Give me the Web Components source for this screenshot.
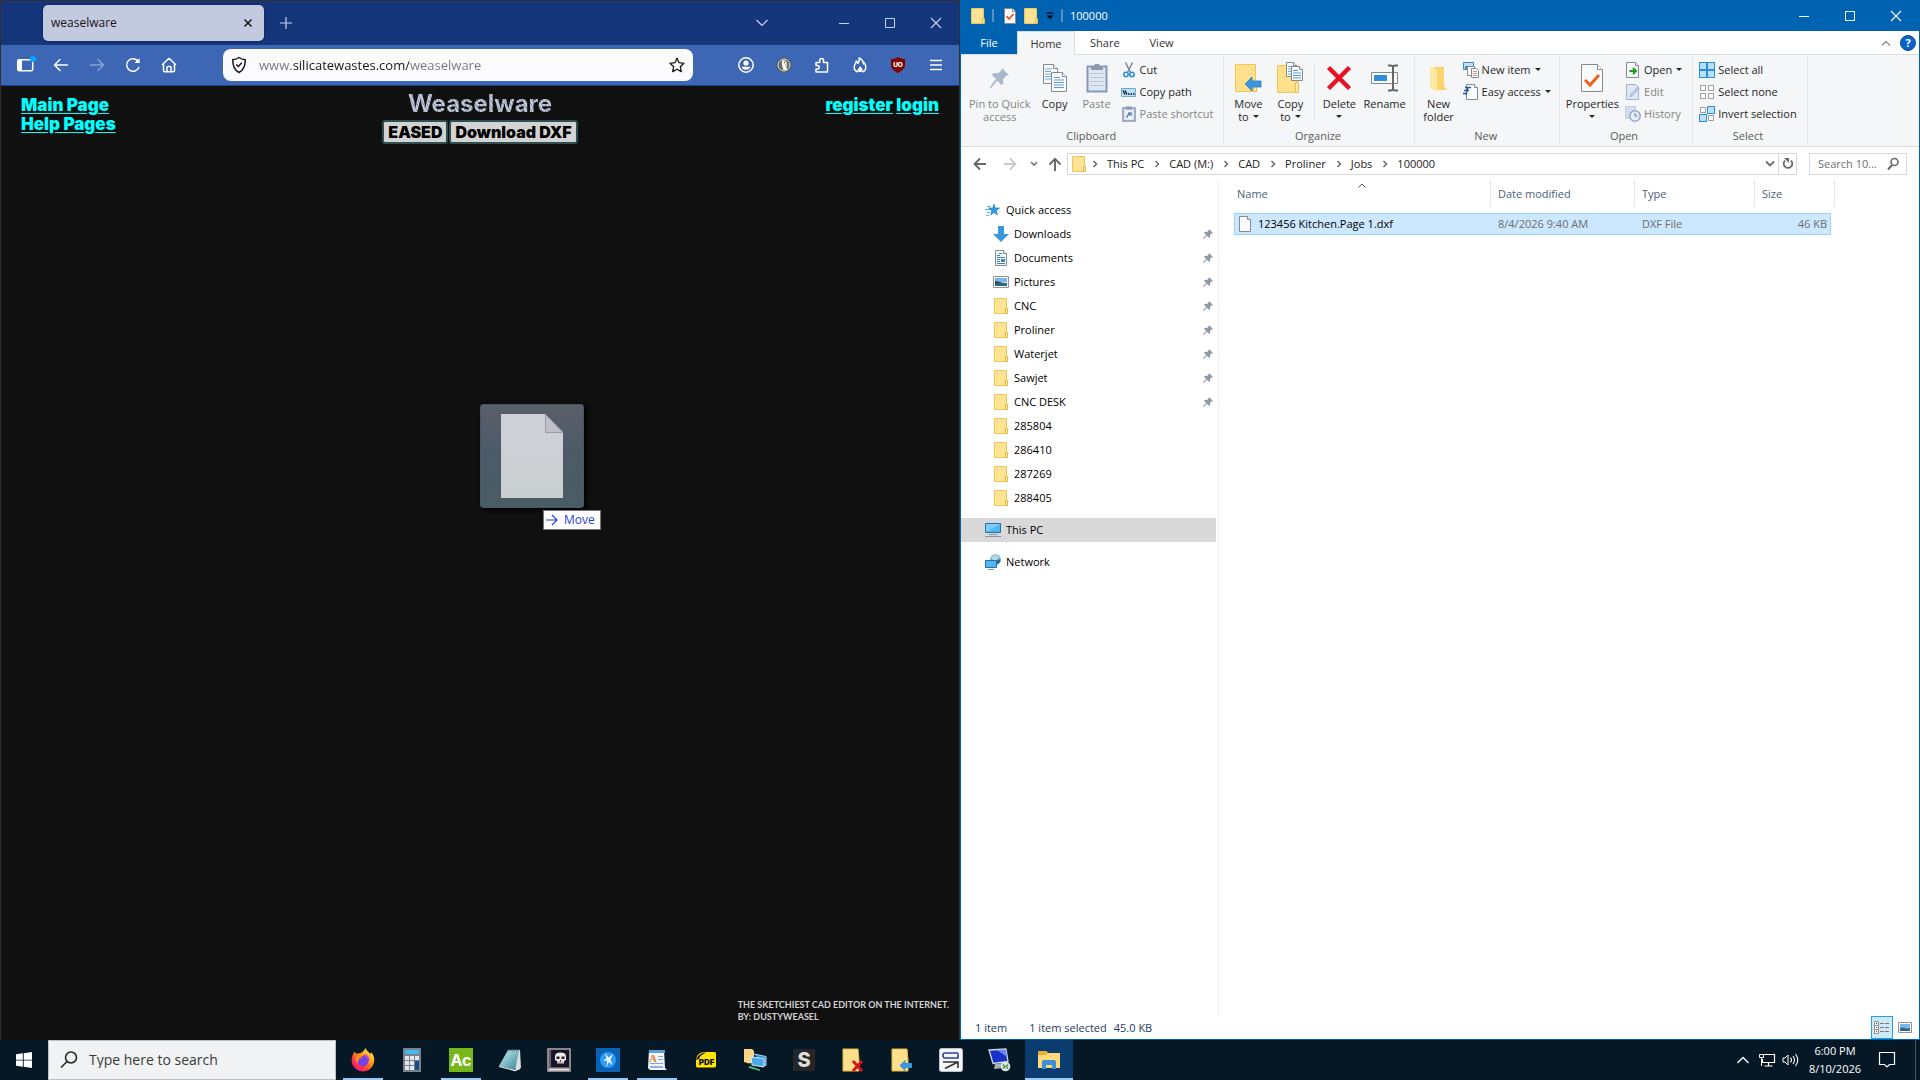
<!DOCTYPE html>
<html lang="en">
<head>
<meta charset="utf-8">
<meta name="viewport" content="width=device-width, initial-scale=1">
<title>weaselware</title>
<style>
  html, body {
    height: 100%;
    margin: 0;
  }
  body {
    background: #101010;
    font: 11px/16px "Open Sans", "Noto Sans", sans-serif;
    overflow: hidden;
  }
</style>
</head>
<body>
<desk-top>
  <browser-window></browser-window>
  <file-explorer></file-explorer>
  <task-bar slot="taskbar"></task-bar>
</desk-top>

<script>
// ---------- icons ----------

const svg = (w, h, body) =>
  `<svg width="${w}" height="${h}" viewBox="0 0 ${w} ${h}" fill="none" xmlns="http://www.w3.org/2000/svg" aria-hidden="true">${body}</svg>`;

const line = 'stroke="currentColor" stroke-width="1.5" stroke-linecap="round" stroke-linejoin="round"';
const page = (x, y, w, h, f) =>
  `<path d="M${x + 0.5} ${y + 0.5}h${w - f - 1}l${f} ${f}v${h - f - 1}h-${w - 1}z" fill="#fafbfc" stroke="#838a92"/><path d="M${x + w - f - 0.5} ${y + 0.5}v${f}h${f}" stroke="#838a92" fill="#fff"/>`;
const square = (x, y, on) =>
  `<rect x="${x + 0.5}" y="${y + 0.5}" width="${on ? 7 : 5}" height="${on ? 7 : 5}" fill="${on ? "#b9e0fb" : "#fff"}" stroke="${on ? "#2b8fdc" : "#a0a0a0"}"/>`;
const folderBig =
  '<path d="M1.5 1.5h20v27h-20z" fill="#ffe08a" stroke="#ecc75a"/><path d="M19.5 18.5h3v10h-3z" fill="#ffe9a8" stroke="#e6bb45"/>';

const ICONS = {
  sidebar: svg(20, 18, '<rect x="2.7" y="3.7" width="15" height="11" rx="1.5" stroke="#fff" stroke-width="1.5"/><path d="M3 4h4v11H3z" fill="#fff"/><circle cx="18" cy="3" r="3" fill="#00a8ff"/>'),
  back: svg(16, 16, `<path d="M14.500 8H1.500M7 2.500 1.500 8 7 13.500" ${line}/>`),
  forward: svg(16, 16, `<path d="M1.500 8h13M9 2.500 14.500 8 9 13.500" ${line}/>`),
  reload: svg(16, 16, `<path d="M13.800 10.500A6.300 6.300 0 1 1 12.500 3.600L14 5" ${line}/><path d="M14.500 1v5h-5z" fill="currentColor"/>`),
  home: svg(16, 16, `<path d="M1.500 7.500 8 1.200l6.500 6.300M2.500 7v6.500q0 1.200 1.200 1.200h8.600q1.200 0 1.200-1.200V7M6 14.500v-4q0-1 1-1h2q1 0 1 1v4" ${line}/>`),
  shield: svg(16, 18, '<path d="M8 1.500c2 1.500 4 2 6.300 2.300 0 6-1 10.200-6.300 12.700C2.700 14 1.700 9.800 1.700 3.800 4 3.500 6 3 8 1.500z" stroke="#15141a" stroke-width="1.500" stroke-linejoin="round"/><path d="m5.300 8.500 2 2 3.500-3.700" stroke="#15141a" stroke-width="1.500"/>'),
  star: svg(16, 16, '<path d="m8 1.200 2 4.500 5 .6-3.700 3.400 1 4.900L8 12.200l-4.300 2.400 1-4.900L1 6.300l5-.6z" stroke="#15141a" stroke-width="1.300" stroke-linejoin="round"/>'),
  account: svg(16, 16, '<circle cx="8" cy="8" r="7.200" stroke="#fff" stroke-width="1.500"/><circle cx="8" cy="6" r="2.600" fill="#fff"/><path d="M3.800 9.800h8.400c0 2-2 3-4.200 3s-4.200-1-4.200-3z" fill="#fff"/>'),
  duck: svg(16, 16, '<circle cx="8" cy="8" r="7.500" fill="#555"/><circle cx="8" cy="8" r="6" stroke="#e4e4e4" fill="#666"/><path d="M6 3.500c3-1 5 1 4.800 3.500-.2 2-.3 3.500.2 6H7.300C6.800 10 5 7 6 3.500z" fill="#f4f4f4"/><path d="M9 7.500h3l-1 1.500H9z" fill="#bbb"/><circle cx="8.500" cy="5.500" r=".7" fill="#444"/>'),
  puzzle: svg(16, 16, `<path d="M2 15h11.500V5.500H9.500V3.300a1.900 1.900 0 0 0-3.800 0v2.200H2v3h1.500a1.700 1.700 0 0 1 0 3.500H2z" ${line}/>`),
  flame: svg(14, 16, '<path d="M5 15C2 14 1 12 1.200 9.700 1.400 7.500 3 6.500 3.200 4c1 .5 1.500 1.500 1.500 2.500C6.500 5 6.500 3 6 1c3.500 1.500 4.500 4 4.500 6 .5-.3.800-.8.800-1.300 1.200 1.800 1.700 3.500 1.500 5.300-.2 2-1.500 3.500-3.500 4" stroke="#fff" stroke-width="1.400" stroke-linejoin="round"/><path d="M7 9c2 2 3 3.500 2.500 5-.5 1.300-4.500 1.300-5 0C4 12.500 6 11.500 7 9z" fill="#fff"/>'),
  ublock: svg(16, 16, '<path d="M8 0c2.200 1.500 4.500 2 7 2.100v6c0 3.500-3 6-7 7.900-4-1.900-7-4.400-7-7.900v-6C3.500 2 5.800 1.500 8 0z" fill="#800000"/><text x="8" y="10" text-anchor="middle" font-family="Inter,sans-serif" font-weight="800" font-size="6.500" fill="#fff">UO</text>'),
  menu: svg(14, 12, '<path d="M1 1.500h12M1 6h12M1 10.500h12" stroke="#fff" stroke-width="1.400"/>'),
  tabClose: svg(10, 10, '<path d="m1.500 1.500 7 7m0-7-7 7" stroke="#15141a" stroke-width="1.500"/>'),
  plus: svg(12, 12, '<path d="M6 0v12M0 6h12" stroke="#c8d3ee" stroke-width="1.200"/>'),
  chevronDown: svg(12, 8, '<path d="m.5 1 5.500 5.500L11.500 1" stroke="currentColor" stroke-width="1.200"/>'),
  minimize: svg(10, 10, '<path d="M0 5.500h10" stroke="currentColor"/>'),
  maximize: svg(10, 10, '<path d="M.5.5h9v9h-9z" stroke="currentColor"/>'),
  close: svg(10, 10, '<path d="m0 0 10 10M10 0 0 10" stroke="currentColor" stroke-width="1.100"/>'),
  moveArrow: svg(14, 12, '<path d="M1 6h11M7 1l5 5-5 5" stroke="#2b3fd0" stroke-width="1.200"/>'),

  folder: svg(14, 16, '<path d="M1 .5h11.500v15H.5V.5z" fill="#ffe394" stroke="#ecc75a"/><path d="M11.500 10.500h2v5h-2z" fill="#ffe9a8" stroke="#e6bb45"/>'),
  checkDoc: svg(12, 16, page(0, 0, 12, 16, 3) + '<path d="m2.500 8 2.500 3 4.500-5" stroke="#e8501a" stroke-width="1.700"/>'),
  quickMenu: svg(8, 8, '<path d="M.5 1h7" stroke="#000" stroke-width="1.200"/><path d="M.5 3.500h7L4 7z" fill="#000"/>'),
  collapse: svg(10, 6, '<path d="M1 5.500 5 1.500l4 4" stroke="#8a8a8a" stroke-width="1.300"/>'),
  help: svg(16, 16, '<circle cx="8" cy="8" r="7.500" fill="#0a63c9" stroke="#0a4b96"/><text x="8" y="12" text-anchor="middle" font-family="Open Sans,sans-serif" font-weight="700" font-size="11" fill="#fff">?</text>'),
  bigPin: svg(24, 26, '<path d="m14 3 7 7-2.500.6-3.500 3.700.3 4.200-1.800 1.500L9.300 15.700 3 23l-1.200-.8L8 14 3.800 9.800 6 8l4.300.3L13.700 5z" fill="#aab8cc"/>'),
  bigCopy: svg(26, 30, page(1, 1, 15, 20, 4) + '<path d="M3 6h7M3 8.500h6M3 11h6M3 13.500h6M3 16h6" stroke="#74a9dc"/>' + page(9, 9, 16, 20, 4) + '<path d="M12 14.500h6M12 17h10M12 19.500h10M12 22h10M12 24.500h10" stroke="#5e9ad6"/>'),
  bigPaste: svg(22, 30, '<rect x="1.500" y="3.500" width="19" height="25" fill="#dfe6f2" stroke="#8698b5" stroke-width="2"/><path d="M4 10.500h14M4 14.500h14M4 18.500h14M4 22.500h14" stroke="#b7c4da"/><path d="M5 3h3l1-2h4l1 2h3v4H5z" fill="#8a98b0"/>'),
  cut: svg(12, 16, '<path d="m2.500.5 5 10M9.500.5l-5 10" stroke="#7b8794" stroke-width="1.500"/><circle cx="3" cy="12.500" r="2.200" stroke="#2b8fdc" stroke-width="1.500"/><circle cx="9" cy="12.500" r="2.200" stroke="#2b8fdc" stroke-width="1.500"/>'),
  copyPath: svg(15, 9, '<path d="M.5.5h14v8H.5z" fill="#b9e0fb" stroke="#6fa9d6"/><path d="m2 2.500 2 4m0-4 2 4" stroke="#111" stroke-width="1.200"/><path d="M7 6h1.500M9.500 6H11M12 6h1.500" stroke="#111" stroke-width="1.500"/>'),
  pasteShortcut: svg(14, 16, '<rect x="1" y="2" width="12" height="13" fill="#dfe6f2" stroke="#8698b5" stroke-width="1.500"/><path d="M4 .5h6v3H4z" fill="#8a98b0"/><path d="M4 5h6v8H4z" fill="#f8fafd"/><path d="M5 12c0-2 1-3.500 3-3.500M6 7h3v3" stroke="#5e7faf" stroke-width="1.400"/>'),
  moveTo: svg(28, 30, folderBig + '<path d="m11 21 7-7v4h9v6h-9v4z" fill="#3a96dd" stroke="#2b7fc4" stroke-width=".8"/>'),
  copyTo: svg(28, 32, '<g transform="translate(0 2)">' + folderBig + '</g>' + page(10, 0, 11, 15, 3) + '<path d="M12 4.500h4M12 7h3M12 9.500h3M12 12h3" stroke="#74a9dc"/>' + page(15, 4, 12, 15, 3) + '<path d="M17 8.500h5M17 11h8M17 13.500h8M17 16h8" stroke="#5e9ad6"/>'),
  delete: svg(26, 26, '<path d="m2.500 2.500 21 21M23.500 2.500l-21 21" stroke="#e81123" stroke-width="4.500"/>'),
  rename: svg(28, 28, '<path d="M.5 8.500h26v11H.5z" fill="#fff" stroke="#838a92"/><path d="M3 11h13v6H3z" fill="#2b8fdc"/><path d="M17 1.500h2.500q2.500 0 2.500 2 0-2 2.500-2H27M17 26.500h2.500q2.500 0 2.500-2 0 2 2.500 2H27M22 3v22" stroke="#666" stroke-width="2"/>'),
  newFolder: svg(20, 30, '<path d="M5 4h10v19l3 4H5z" fill="#fbd46d"/><path d="m1 3 7 4v22l-7-4z" fill="#ffe8a6"/>'),
  newItem: svg(16, 16, '<path d="M.5.5h10v7H.5z" fill="#b9e0fb" stroke="#4b86b0"/><path d="M2 4h3v3H2z" fill="#4b86b0"/><path d="M4.500 4.500h7v9h-7z" fill="#fff" stroke="#838a92"/><path d="M8.500 6.500h5l2 2v7h-7z" fill="#fff" stroke="#838a92"/><path d="M10 9.500h4M10 11.500h4M10 13.500h4" stroke="#d58a8a"/>'),
  easyAccess: svg(16, 16, page(3, 0, 12, 16, 3) + '<path d="M2 3.500h6M1 6.500h5M0 9.500h3M5 3l-2 8" stroke="#245a96" stroke-width="1.300"/>'),
  properties: svg(22, 30, page(0, 1, 22, 28, 5) + '<path d="m4 17 5 5 9-10" stroke="#f0611a" stroke-width="3"/>'),
  open: svg(14, 16, page(0, 0, 13, 16, 3) + '<path d="M3.500 9h6M7 6l3 3-3 3" stroke="#12a012" stroke-width="1.900"/>'),
  edit: svg(14, 16, '<path d="M.5.500h9l3 3v12H.5z" fill="#dfe8f5" stroke="#9fb2d0"/><path d="m4 13 1-3 7-7 1.500 1.500-7 7z" fill="#c3d0e6" stroke="#9fb2d0"/>'),
  history: svg(16, 16, '<path d="M.5.500h10v12H.5z" fill="#d3deef" stroke="#c0cde2"/><circle cx="10" cy="10" r="5.200" fill="#e9eff8" stroke="#93a7c8" stroke-width="1.500"/><path d="M10 7v3h2.500" stroke="#7288ad" stroke-width="1.200"/>'),
  selectAll: svg(16, 16, square(0, 0, 1) + square(8, 0, 1) + square(0, 8, 1) + square(8, 8, 1)),
  selectNone: svg(16, 16, square(1, 1) + square(9, 1) + square(1, 9) + square(9, 9)),
  invert: svg(16, 16, square(1, 1) + square(8, 0, 1) + square(0, 8, 1) + square(9, 9)),
  navBack: svg(14, 14, '<path d="M13 7H2M7 1.500 1.500 7 7 12.500" stroke="currentColor" stroke-width="1.800"/>'),
  navForward: svg(14, 14, '<path d="M1 7h11M7 1.500 12.500 7 7 12.500" stroke="currentColor" stroke-width="1.800"/>'),
  navUp: svg(14, 14, '<path d="M7 14V2M1.500 7.500 7 1.800l5.500 5.700" stroke="#666" stroke-width="1.900"/>'),
  small: svg(8, 6, '<path d="m1 1 3 3 3-3" stroke="#777" stroke-width="1.700"/>'),
  combo: svg(10, 8, '<path d="m1 1.500 4 4 4-4" stroke="#6a6a6a" stroke-width="1.800"/>'),
  crumb: svg(6, 8, '<path d="m1.500 1 3 3-3 3" stroke="#6a6a6a" stroke-width="1.500"/>'),
  refresh: svg(12, 14, '<path d="M3 3.500a4.300 4.300 0 1 0 6 0" stroke="#6a6a6a" stroke-width="1.800"/><path d="M2 1h5v5z" fill="#6a6a6a"/>'),
  find: svg(12, 14, '<circle cx="7.500" cy="5" r="3.500" stroke="#6a6a6a" stroke-width="1.600"/><path d="M5 8 1 12.500" stroke="#6a6a6a" stroke-width="2"/>'),
  quick: svg(16, 14, '<path d="m9 1 1.300 4H14.500L11.200 7.700l1.300 4.300L9 9.500 5.500 12l1.300-4.300L3.500 5h4.200z" fill="#2b9be8" stroke="#1b7fc8" stroke-width=".6"/><path d="M2 3.500h4M0 6.500h5M2 9.500h3M1 12.500h3" stroke="#67b7ee"/>'),
  download: svg(16, 16, '<path d="M5 0h6v8h5l-8 8-8-8h5z" fill="#3a96dd"/>'),
  documents: svg(14, 16, page(1, 0, 12, 16, 3) + '<path d="M3 5.500h3M5 3.500h3M3 7.500h8M3 9.500h3M3 11.500h3M3 13.500h8" stroke="#3a86b8"/><path d="M7 9h4v3H7z" fill="#3a86b8"/>'),
  pictures: svg(16, 12, '<path d="M.5.500h15v11H.5z" fill="#fff" stroke="#8f959b"/><path d="M2 2h12v4H2z" fill="#79b4ee"/><path d="M2 6c5-1 7 1 12 1v3H2z" fill="#2d6a86"/><path d="M2 5c3 0 5 2 8 2.500H2z" fill="#2c4a46"/>'),
  pc: svg(16, 16, '<path d="M.5 1.500h15v9H.5z" fill="#4fb6f7" stroke="#2b6f9f"/><path d="M1 2h14L1 10z" fill="#7fccfb"/><path d="M4 12.500h8M0 14.500h16" stroke="#8799ab"/>'),
  network: svg(16, 16, '<circle cx="10.500" cy="5.500" r="5.300" fill="#6fa7c2"/><path d="M6 4c3-4 6-4 9 0-2 0-3 1-3 3s-4 0-6-3z" fill="#b6d7e5"/><path d="M11 8c2-3 3-3 4.500-2 0 2-2 4-4 4.500z" fill="#2c6787"/><path d="M.5 6.500h11v7H.5z" fill="#4fb6f7" stroke="#2b6f9f"/><path d="M3 15.500h6" stroke="#8799ab"/>'),
  pin: svg(10, 10, '<path d="M6 0 10 4 8.500 4.500 7 6l.2 2-1 1L4 6.800.7 10 0 9.300l3.200-3.300L1 3.800l1-1 2 .2L5.500 1.500z" fill="#8e9aa6"/>'),
  file: svg(14, 16, page(1, 0, 12, 16, 3)),
  sort: svg(8, 5, '<path d="M.5 4.500 4 1l3.500 3.500" stroke="#555"/>'),
  details: svg(16, 13, '<path d="M.5.500h4v12h-4zM.5 4.500h4M.5 8.500h4" fill="#fff" stroke="#8f8f8f"/><path d="M2 2h1v1H2zM2 6h1v1H2z" fill="#333"/><path d="M2 10h1v1H2z" fill="#c22"/><path d="M6 2.500h4m1 0h4m-9 4h4m1 0h4m-9 4h4m1 0h4" stroke="#777"/>'),
  thumbs: svg(14, 11, '<path d="M.5.500h13v10H.5z" fill="#fff" stroke="#8f959b"/><path d="M2 2h10v4H2z" fill="#79b4ee"/><path d="M2 6c4-1 6 1 10 0v3H2z" fill="#2d6a86"/>'),
  dragFile: svg(62, 84, '<defs><linearGradient id="p" x2="0" y2="1"><stop stop-color="#cfd1d9"/><stop offset="1" stop-color="#c9cece"/></linearGradient></defs><path d="M0 0h44l18 18v66H0z" fill="url(#p)"/><path d="M44.500.5v18H61.500z" fill="#bdc0c6" stroke="#9a9da4"/>'),

  windows: svg(16, 16, '<path d="M0 2.300 6.800 1.300v6.400H0zM7.700 1.200 16 0v7.700H7.700zM0 8.500h6.800v6.300L0 13.800zM7.700 8.500H16V16l-8.300-1.200z" fill="#fff"/>'),
  search: svg(18, 18, '<circle cx="11" cy="6.500" r="5.500" stroke="#222" stroke-width="1.500"/><path d="M7 10.500 1 16.500" stroke="#222" stroke-width="1.500"/>'),
  firefox: svg(24, 24, '<defs><linearGradient id="f" x1="1" x2=".2" y2="1"><stop offset=".1" stop-color="#fff44f"/><stop offset=".45" stop-color="#ff980e"/><stop offset=".75" stop-color="#ff3647"/><stop offset="1" stop-color="#e31587"/></linearGradient></defs><path d="M14.500 0c1 3 4 4 4.500 6l1.500-1.500c2.500 3 3 6 2.500 9.500-1 5.500-5.500 9.500-11 9.500S1 19 .7 13.500C.5 10 1 8 2.500 5.500L3 3.500l2.500 2.300c1-.6 2-.7 3-.5C10 5 12.500 4 14.500 0z" fill="url(#f)"/><circle cx="12" cy="13" r="5.300" fill="#7542e5"/><path d="M5 8.500c2-1.500 5-1 6.500 1-1.500 0-3.500 1-4 2.500-.8 1.500-.5 3 0 4-3-1.500-4-5-2.500-7.500z" fill="#ff8a16"/><path d="M13 7c3.500.5 5 3 4.500 6" stroke="#b833e1" stroke-width="1.500"/>'),
  calc: svg(18, 24, '<path d="M0 0h18v24H0z" fill="#78838d"/><path d="M2 2h14v4H2z" fill="#45b8ef"/><path d="M2 8h4v4H2zm5 0h4v4H7zm5 0h4v4h-4zM2 13h4v4H2zm5 0h4v4H7zM2 18h4v4H2zm5 0h4v4H7z" fill="#e3e7ea"/><path d="M12 13h4v9h-4z" fill="#174a86"/>'),
  ac: svg(24, 24, '<path d="M0 0h24v24H0z" fill="#76b81a"/><text x="12" y="18" text-anchor="middle" font-family="Inter,sans-serif" font-weight="700" font-size="16" fill="#fff">Ac</text>'),
  notes: svg(24, 24, '<defs><linearGradient id="n" x2="1" y2="1"><stop stop-color="#d2eef0"/><stop offset=".5" stop-color="#7fbcc7"/><stop offset="1" stop-color="#2f7f92"/></linearGradient></defs><path d="m10 3 12-1 1 18-5 2z" fill="#d9dfe0"/><path d="m10 2 11 1-4 19L1 18z" fill="url(#n)"/><path d="M1 18.500 17 22.500l5-2" stroke="#eef7f8" stroke-width="1.200"/><path d="M10 2.500h12" stroke="#7f8e92" stroke-width="2" stroke-dasharray="1 1"/>'),
  book: svg(24, 24, '<path d="M1 1h22v22H1z" fill="#171431" stroke="#b4aaa6" stroke-width="1.500"/><path d="M3 1v19h20" stroke="#877" stroke-width="1.500"/><path d="M2 20.500h20v2H2z" fill="#e9e5de"/><path d="M8 8.500q0-4 5.500-4T19 8.500v3.500l-2 1v2.500h-7V13l-2-1z" fill="#f0ece1"/><path d="M9.500 8.500h3V11h-3zm5 0h3V11h-3zM13 12h1v1.500h-1z" fill="#2b1d2f"/><path d="M11 13.500v2m2-2v2m2-2v2" stroke="#a33" stroke-width=".8"/>'),
  kite: svg(24, 24, '<path d="M0 0h24v24H0z" fill="#0a62b4"/><circle cx="12" cy="12" r="8" fill="#2f9bf2"/><path d="m9 5 3.500 4.500L17 6l-2.500 5.500 2 5.500-3.500-3-2.500 5 .5-6.500-4 .5 3.500-3z" fill="#e8f5ff"/>'),
  wordpad: svg(20, 22, '<path d="M2 1h15l1 18 2 2H3L1 19z" fill="#f1f5fa"/><path d="M2 1h16v3H2z" fill="#5f9fd2"/><text x="2" y="13" font-family="Liberation Serif,serif" font-weight="700" font-size="11" fill="#e8822a">A</text><path d="M11 7.500h5m-5 3h5M3 14.500h13" stroke="#7fa5d4"/><path d="M3 17h13v2H3z" fill="#8fb3de"/>'),
  pdf: svg(22, 18, '<path d="M1 10C1 4 5 1 10 1h9.500Q21 1 21 2.500V15q0 1.500-1.500 1.500h-17Q1 16.500 1 15z" fill="#ffe500"/><path d="M1 9C3 3 8 1.500 11 1.500 8 3 5 4.500 4 8z" fill="#222"/><text x="11.500" y="13.500" text-anchor="middle" font-family="Inter,sans-serif" font-weight="900" font-size="8" fill="#111">PDF</text>'),
  netFolder: svg(24, 24, '<path d="M1 1h8l2 2v11l-5 1.500L1 14z" fill="#f6d585"/><path d="m11 6 12 2.500v9L20 17" fill="#2b8fdc" stroke="#a9d8f6"/><path d="m8 9 13 1.500v8.500L9 17z" fill="#4aa8e8" stroke="#d7eefb"/><path d="m7 18 10 3.500V23L5 19.500z" fill="#4dc47e"/>'),
  essLogo: svg(24, 24, '<path d="M1 1h22v22H1z" fill="#262626"/><text x="12" y="19" text-anchor="middle" font-family="Inter,sans-serif" font-weight="800" font-size="20" fill="#dedede">S</text>'),
  folderX: svg(22, 24, '<path d="M1 1h15l1 11v11H1z" fill="#ffe08a" stroke="#e6bb45"/><path d="m11 13 9 10m0-10-9 10" stroke="#d8111c" stroke-width="2.800"/>'),
  folderBack: svg(22, 24, '<path d="M1 1h15l1 11v11H1z" fill="#ffe08a" stroke="#e6bb45"/><path d="m8.500 17.500 6-6V15H21v5h-6.500v3.500z" fill="#3a96dd"/>'),
  scroll: svg(24, 24, '<rect x=".5" y=".5" width="23" height="23" rx="2" fill="#f5f6fa" stroke="#bfc3c9"/><path d="M19 5H6Q4 5 4 7.500T6 10h13V5.500" stroke="#2f3f9f" stroke-width="1.600"/><path d="M4 14h15v6M19 14 6 20.500" stroke="#333" stroke-width="1.600"/>'),
  remote: svg(24, 24, '<path d="m1 2 17-1 2 12.500-15 2z" fill="#1a31c9" stroke="#d5d9e0" stroke-width="1.300"/><path d="m9 2 9-.5 1 7.500z" fill="#6c86f2"/><path d="m7 16 7-1 1 5-9 1z" fill="#a9b2bc"/><circle cx="17.500" cy="18.500" r="4.800" fill="#dfe5e2"/><path d="m15 16.500 2 2-2 2m5-4-2 2 2 2" stroke="#3f9a4d" stroke-width="1.400"/>'),
  explorer: svg(22, 20, '<path d="M0 1h8l2 2h12v15H0z" fill="#ffd87a"/><path d="M0 1h8l2 2-2 2H0z" fill="#e9ad35"/><path d="M4 19v-7q0-2 2-2h10q2 0 2 2v7h-4v-4H8v4z" fill="#3a8fd8"/>'),
  trayUp: svg(14, 8, '<path d="M1.500 7 7 1.500 12.500 7" stroke="#fff" stroke-width="1.300"/>'),
  trayNet: svg(18, 14, '<path d="M6 1.500h10.500v8H4.500V6M10.500 10v3M6.500 13h8" stroke="#fff" stroke-width="1.200"/><path d="M1.500 1.500h4v3h-4zM3.500 4.500V13" stroke="#fff"/>'),
  volume: svg(18, 14, '<path d="M1 5v4h2l3 3V2L3 5z" stroke="#fff"/><path d="M8.500 4.500q2 2.500 0 5M11 3q3 4 0 8M13.500 1q4.500 6 0 12" stroke="#fff" stroke-width="1.100"/>'),
  notice: svg(18, 18, '<path d="M1.500 1.500h15v12h-5L9 16l-2.500-2.500h-5z" stroke="#fff" stroke-width="1.200"/>'),
};

// ---------- base ----------

const RESET = `
  * { box-sizing: border-box; }
  :host([hidden]) { display: none; }
  button, input {
    margin: 0;
    padding: 0;
    border: 0;
    background: none;
    color: inherit;
    font: inherit;
  }
  button { cursor: default; }
  button, a { outline-offset: -2px; }
  .ctl { display: grid; place-items: center; }
`;

class BaseElement extends HTMLElement {
  constructor() {
    super();
    this.attachShadow({ mode: "open" });
  }

  connectedCallback() {
    this.shadowRoot.innerHTML = `<style>${RESET}${this.styles()}</style>${this.markup()}`;
  }

  styles() { return ""; }
  markup() { return ""; }
}

class UiIcon extends BaseElement {
  styles() {
    return `
      :host { display: inline-grid; place-items: center; flex: none; }
      svg { display: block; overflow: visible; }
    `;
  }
  markup() {
    return ICONS[this.getAttribute("name")] || "";
  }
}
customElements.define("ui-icon", UiIcon);

class DeskTop extends BaseElement {
  styles() {
    return `
      :host { display: grid; grid-template-rows: minmax(0, 1fr) auto; height: 100vh; }
      .windows { display: grid; grid-template-columns: 1fr 1fr; min-height: 0; }
    `;
  }
  markup() {
    return `<div class="windows"><slot></slot></div><slot name="taskbar"></slot>`;
  }
}
customElements.define("desk-top", DeskTop);

class WindowControls extends BaseElement {
  styles() {
    return `
      :host { display: flex; align-self: stretch; margin-left: auto; }
      .ctl { width: 46px; }
    `;
  }
  markup() {
    return ["minimize", "maximize", "close"]
      .map((n) => `<button class="ctl" type="button" aria-label="${n}"><ui-icon name="${n}"></ui-icon></button>`)
      .join("");
  }
}
customElements.define("window-controls", WindowControls);

// ---------- browser ----------

class BrowserWindow extends BaseElement {
  styles() {
    return `
      :host {
        display: grid;
        grid-template-rows: 44px 41px minmax(0, 1fr);
        min-width: 0;
        border: 1px solid #303030;
        border-bottom: 0;
        background: #101010;
      }
      .tabs { display: flex; align-items: center; background: #16367c; color: #c8d3ee; padding-left: 42px; }
      .tab {
        display: flex;
        align-items: center;
        justify-content: space-between;
        width: 221px;
        height: 36px;
        padding: 0 10px 0 8px;
        border-radius: 5px;
        background: #c3cae0;
        color: #15141a;
        font-size: 12px;
        box-shadow: 0 0 3px #0a1f50;
      }
      .tab .ctl { width: 12px; height: 12px; }
      .new { width: 44px; height: 36px; }
      .list { width: 46px; height: 36px; margin-left: auto; }
      window-controls { margin-left: 36px; }
      .bar {
        display: flex;
        align-items: center;
        padding: 0 4px 0 6px;
        background: #3d66b5;
        border-bottom: 1px solid #1c3f85;
        color: #fff;
      }
      .bar .ctl { width: 36px; height: 32px; }
      .off { color: #8ba3d4; }
      .url {
        display: flex;
        align-items: center;
        flex: 1;
        height: 32px;
        margin: 0 34px 0 36px;
        padding: 0 0 0 8px;
        border-radius: 8px;
        background: #fbfbfe;
      }
      .url .ctl { width: 32px; }
      /* the host name stands out from the rest of the address */
      .url input {
        flex: 1;
        min-width: 0;
        height: 24px;
        margin-left: 12px;
        outline: 0;
        font-size: 13px;
        color: #6f6f78;
        background: linear-gradient(90deg, #74747c 33px, #15141a 33px, #15141a 150px, #74747c 150px);
        background-clip: text;
        -webkit-background-clip: text;
        -webkit-text-fill-color: transparent;
      }
      .extras { display: flex; }
      .extras .ctl { width: 38px; }
    `;
  }
  markup() {
    const btn = (name, label, cls = "") =>
      `<button class="ctl ${cls}" type="button" aria-label="${label}"><ui-icon name="${name}"></ui-icon></button>`;
    return `
      <div class="tabs">
        <div class="tab"><span>weaselware</span>${btn("tabClose", "Close tab")}</div>
        ${btn("plus", "New tab", "new")}
        ${btn("chevronDown", "List all tabs", "list")}
        <window-controls></window-controls>
      </div>
      <div class="bar">
        ${btn("sidebar", "Sidebar")}
        ${btn("back", "Back")}
        ${btn("forward", "Forward", "off")}
        ${btn("reload", "Reload")}
        ${btn("home", "Home")}
        <div class="url">
          <ui-icon name="shield"></ui-icon>
          <input type="text" aria-label="Address" value="www.silicatewastes.com/weaselware" spellcheck="false">
          ${btn("star", "Bookmark")}
        </div>
        <div class="extras">
          ${btn("account", "Account")}
          ${btn("duck", "Search extension")}
          ${btn("puzzle", "Extensions")}
          ${btn("flame", "Clear data")}
          ${btn("ublock", "Blocker")}
          ${btn("menu", "Menu")}
        </div>
      </div>
      <weasel-page></weasel-page>
    `;
  }
}
customElements.define("browser-window", BrowserWindow);

class WeaselPage extends BaseElement {
  styles() {
    return `
      :host {
        position: relative;
        display: flex;
        flex-direction: column;
        min-height: 0;
        font: 900 16px/19px Inter, sans-serif;
      }
      header { display: grid; grid-template-columns: 1fr auto 1fr; padding: 4px 20px 0; }
      nav { padding-top: 6px; font-size: 17px; }
      nav a { color: #0ff; text-underline-offset: 2px; }
      .left a { display: block; width: fit-content; }
      .right { text-align: right; }
      .mid { text-align: center; }
      h1 {
        width: fit-content;
        margin: 0 auto;
        font-size: 24px;
        line-height: 28px;
        color: #b8bfd2;
        background: repeating-linear-gradient(60deg, #c3cadb 0 2px, #8e95a8 2px 3px);
        background-clip: text;
        -webkit-background-clip: text;
        -webkit-text-fill-color: transparent;
      }
      .row { display: flex; gap: 1px; margin-top: 2px; }
      .row button {
        height: 24px;
        padding: 0 4px;
        border: 2px solid #2f4f4f;
        border-radius: 3px;
        background: #d3d3d3;
        color: #000;
      }
      footer {
        align-self: flex-end;
        margin: auto 10px 17px 0;
        font: 700 9px/12px Lato, sans-serif;
        color: #d3d3d3;
      }
      drag-ghost { position: absolute; left: 50%; top: 318px; }
    `;
  }
  markup() {
    return `
      <header>
        <nav class="left"><a href="#main">Main Page</a><a href="#help">Help Pages</a></nav>
        <div class="mid">
          <h1>Weaselware</h1>
          <div class="row"><button type="button">EASED</button><button type="button">Download DXF</button></div>
        </div>
        <nav class="right"><a href="#register">register</a> <a href="#login">login</a></nav>
      </header>
      <footer>THE SKETCHIEST CAD EDITOR ON THE INTERNET.<br>BY: DUSTYWEASEL</footer>
      <drag-ghost>Move</drag-ghost>
    `;
  }
}
customElements.define("weasel-page", WeaselPage);

// file thumbnail that follows the pointer while dragging
class DragGhost extends BaseElement {
  styles() {
    return `
      :host { display: block; font: 12px/18px "Open Sans", sans-serif; }
      .thumb {
        display: grid;
        place-items: center;
        width: 104px;
        height: 104px;
        border: 1px solid #46566a;
        border-radius: 3px;
        background: linear-gradient(#5b5f68, #4c5a68 45%, #495c63);
        box-shadow: 2px 2px 5px #000;
      }
      .tip {
        display: flex;
        align-items: center;
        gap: 5px;
        width: fit-content;
        margin: 2px 0 0 63px;
        padding: 0 5px 0 1px;
        border: 1px solid #767676;
        background: #fff;
        color: #2b3fd0;
      }
    `;
  }
  markup() {
    return `
      <div class="thumb"><ui-icon name="dragFile"></ui-icon></div>
      <div class="tip"><ui-icon name="moveArrow"></ui-icon><slot></slot></div>
    `;
  }
}
customElements.define("drag-ghost", DragGhost);

// ---------- ribbon ----------

class RibbonGroup extends BaseElement {
  styles() {
    return `
      :host {
        display: flex;
        flex-direction: column;
        margin: 2px 0;
        padding: 2px 7px 0 3px;
        border-right: 1px solid #e2e3e4;
      }
      :host([tight]) { padding-right: 5px; }
      :host(:first-child) { padding-left: 5px; }
      .items { display: flex; flex: 1; }
      .name { text-align: center; line-height: 16px; color: #5a5a5a; }
      ::slotted(hr) { width: 1px; margin: 5px 3px 8px; border: 0; background: #e2e3e4; }
      ::slotted(div) { display: flex; flex-direction: column; }
    `;
  }
  markup() {
    return `<div class="items"><slot></slot></div><div class="name">${this.getAttribute("label")}</div>`;
  }
}
customElements.define("ribbon-group", RibbonGroup);

class RibbonButton extends BaseElement {
  styles() {
    return `
      :host { display: block; color: #262626; }
      :host([off]) { color: #838383; }
      button {
        display: flex;
        align-items: center;
        gap: 3px;
        height: 22px;
        padding: 0 3px;
        white-space: nowrap;
      }
      ui-icon { width: 16px; }
      :host([large]) button {
        flex-direction: column;
        gap: 0;
        min-width: 42px;
        height: auto;
        line-height: 13px;
      }
      :host([large]) ui-icon { width: 32px; height: 38px; }
      .arrow::after {
        content: "";
        display: inline-block;
        margin-left: 4px;
        vertical-align: 3px;
        border: 3px solid transparent;
        border-top-color: currentColor;
        border-bottom: 0;
      }
      :host([bare]) .arrow::after { margin-left: 0; }
    `;
  }
  markup() {
    const arrow = this.hasAttribute("menu") ? ' class="arrow"' : "";
    return `<button type="button"><ui-icon name="${this.getAttribute("icon")}"></ui-icon><span${arrow}><slot></slot></span></button>`;
  }
}
customElements.define("ribbon-button", RibbonButton);

class RibbonBar extends BaseElement {
  styles() {
    return `
      :host {
        display: flex;
        height: 93px;
        background: #f5f6f7;
        border-top: 1px solid #dadbdc;
        border-bottom: 1px solid #dadbdc;
      }
      .groups { display: flex; }
    `;
  }
  markup() {
    return `
      <div class="groups">
        <ribbon-group label="Clipboard">
          <ribbon-button large off icon="bigPin">Pin to Quick<br>access</ribbon-button>
          <ribbon-button large icon="bigCopy">Copy</ribbon-button>
          <ribbon-button large off icon="bigPaste">Paste</ribbon-button>
          <div>
            <ribbon-button icon="cut">Cut</ribbon-button>
            <ribbon-button icon="copyPath">Copy path</ribbon-button>
            <ribbon-button off icon="pasteShortcut">Paste shortcut</ribbon-button>
          </div>
        </ribbon-group>
        <ribbon-group label="Organize" tight>
          <ribbon-button large menu icon="moveTo">Move<br>to</ribbon-button>
          <ribbon-button large menu icon="copyTo">Copy<br>to</ribbon-button>
          <hr>
          <ribbon-button large menu bare icon="delete">Delete<br></ribbon-button>
          <ribbon-button large icon="rename">Rename</ribbon-button>
        </ribbon-group>
        <ribbon-group label="New" tight>
          <ribbon-button large icon="newFolder">New<br>folder</ribbon-button>
          <div>
            <ribbon-button menu icon="newItem">New item</ribbon-button>
            <ribbon-button menu icon="easyAccess">Easy access</ribbon-button>
          </div>
        </ribbon-group>
        <ribbon-group label="Open">
          <ribbon-button large menu bare icon="properties">Properties<br></ribbon-button>
          <div>
            <ribbon-button menu icon="open">Open</ribbon-button>
            <ribbon-button off icon="edit">Edit</ribbon-button>
            <ribbon-button off icon="history">History</ribbon-button>
          </div>
        </ribbon-group>
        <ribbon-group label="Select">
          <div>
            <ribbon-button icon="selectAll">Select all</ribbon-button>
            <ribbon-button icon="selectNone">Select none</ribbon-button>
            <ribbon-button icon="invert">Invert selection</ribbon-button>
          </div>
        </ribbon-group>
      </div>
    `;
  }
}
customElements.define("ribbon-bar", RibbonBar);

// ---------- explorer ----------

class AddressRow extends BaseElement {
  styles() {
    return `
      :host { display: flex; align-items: center; height: 34px; padding: 0 12px 0 4px; color: #1b1b1b; }
      .ctl { width: 30px; height: 22px; color: #666; }
      .ctl.off { color: #c8c8c8; }
      .ctl.slim { width: 18px; }
      .ctl.up { width: 24px; }
      .path {
        display: flex;
        align-items: center;
        flex: 1;
        height: 22px;
        padding-left: 4px;
        border: 1px solid #d9d9d9;
        min-width: 0;
      }
      .path a { color: inherit; text-decoration: none; margin: 0 10px 0 9px; }
      .path ui-icon[name="crumb"] { width: 6px; }
      .path ui-icon[name="folder"] { margin-right: 6px; }
      .path .combo { margin-left: auto; width: 16px; }
      .path .reload { width: 18px; border-left: 1px solid #d9d9d9; }
      .find {
        display: flex;
        align-items: center;
        width: 98px;
        height: 22px;
        margin-left: 12px;
        padding: 0 7px 0 8px;
        border: 1px solid #d9d9d9;
      }
      .find input { flex: 1; min-width: 0; outline: 0; }
      .find input::placeholder { color: #6d6d6d; }
    `;
  }
  markup() {
    const crumbs = ["This PC", "CAD (M:)", "CAD", "Proliner", "Jobs", "100000"];
    return `
      <button class="ctl" type="button" aria-label="Back"><ui-icon name="navBack"></ui-icon></button>
      <button class="ctl off" type="button" aria-label="Forward"><ui-icon name="navForward"></ui-icon></button>
      <button class="ctl slim" type="button" aria-label="Recent"><ui-icon name="small"></ui-icon></button>
      <button class="ctl up" type="button" aria-label="Up"><ui-icon name="navUp"></ui-icon></button>
      <div class="path">
        <ui-icon name="folder"></ui-icon>
        ${crumbs.map((c) => `<ui-icon name="crumb"></ui-icon><a href="#path">${c}</a>`).join("")}
        <button class="ctl combo" type="button" aria-label="Previous locations"><ui-icon name="combo"></ui-icon></button>
        <button class="ctl reload" type="button" aria-label="Refresh"><ui-icon name="refresh"></ui-icon></button>
      </div>
      <label class="find"><input type="text" aria-label="Search" placeholder="Search 10..."><ui-icon name="find"></ui-icon></label>
    `;
  }
}
customElements.define("address-row", AddressRow);

class NavItem extends BaseElement {
  styles() {
    return `
      :host { display: block; }
      a {
        display: flex;
        align-items: center;
        height: 24px;
        padding: 0 3px 0 24px;
        color: #000;
        text-decoration: none;
      }
      :host([child]) a { padding-left: 32px; }
      :host([current]) { background: #d9d9d9; }
      .kind { width: 16px; margin-right: 5px; }
      .pin { margin-left: auto; }
    `;
  }
  markup() {
    const pin = this.hasAttribute("pinned") ? '<ui-icon class="pin" name="pin"></ui-icon>' : "";
    return `<a href="#go"><ui-icon class="kind" name="${this.getAttribute("icon")}"></ui-icon><slot></slot>${pin}</a>`;
  }
}
customElements.define("nav-item", NavItem);

class FileTable extends BaseElement {
  styles() {
    return `
      :host { display: block; position: relative; padding: 0 0 0 15px; color: #6d6d6d; }
      .sort { position: absolute; left: 139px; top: 2px; }
      table { width: 597px; max-width: 100%; table-layout: fixed; border-collapse: separate; border-spacing: 0; }
      th, td { padding: 0 0 0 7px; text-align: left; font-weight: 400; white-space: nowrap; }
      th { height: 26px; color: #4c607a; border-right: 1px solid #e5e5e5; }
      th:first-child, td:first-child { padding-left: 3px; }
      th:last-child { position: relative; border-right: 0; }
      th:last-child::after {
        content: "";
        position: absolute;
        inset: 0 -4px 0 auto;
        border-right: 1px solid #e5e5e5;
      }
      tbody::before { content: ""; display: block; height: 6px; }
      td { height: 22px; background: #cce8ff; border: solid #99d1ff; border-width: 1px 0; }
      td:first-child { border-left-width: 1px; color: #000; }
      td:last-child { border-right-width: 1px; text-align: right; padding-right: 3px; }
      .name { display: flex; align-items: center; gap: 6px; }
      col.d { width: 144px; }
      col.t { width: 120px; }
      col.s { width: 76px; }
    `;
  }
  markup() {
    return `
      <ui-icon class="sort" name="sort"></ui-icon>
      <table>
        <colgroup><col><col class="d"><col class="t"><col class="s"></colgroup>
        <thead><tr><th>Name</th><th>Date modified</th><th>Type</th><th>Size</th></tr></thead>
        <tbody>
          <tr>
            <td><span class="name"><ui-icon name="file"></ui-icon>123456 Kitchen.Page 1.dxf</span></td>
            <td>8/4/2026 9:40 AM</td>
            <td>DXF File</td>
            <td>46 KB</td>
          </tr>
        </tbody>
      </table>
    `;
  }
}
customElements.define("file-table", FileTable);

class FileExplorer extends BaseElement {
  styles() {
    return `
      :host {
        display: flex;
        flex-direction: column;
        min-width: 0;
        border: 1px solid #0063b1;
        border-top: 0;
        background: #fff;
      }
      .title { display: flex; align-items: center; height: 31px; padding-left: 10px; background: #0063b1; color: #fff; }
      .title i { width: 2px; height: 13px; margin: 0 7px; border: solid #5b8fbf; border-width: 0 1px; }
      .quick { display: flex; align-items: center; gap: 8px; margin-left: 3px; }
      .tabs { display: flex; height: 23px; color: #333; }
      .tabs button { padding: 0 15px; }
      .tabs .file { width: 56px; background: #0063b1; color: #fff; }
      .tabs .on {
        width: 58px;
        height: 24px;
        padding: 0;
        border: 1px solid #dadbdc;
        border-bottom: 0;
        background: #f5f6f7;
        z-index: 1;
      }
      .tabs .file { padding: 0; }
      .tabs .ctl { padding: 0; width: 22px; }
      .tabs .up { margin-left: auto; }
      .body { display: grid; grid-template-columns: 258px minmax(0, 1fr); flex: 1; min-height: 0; }
      .tree { padding: 17px 2px 0 0; border-right: 1px solid #f0f0f0; }
      .tree .gap { margin-top: 8px; }
      .status { display: flex; align-items: center; height: 23px; padding: 0 3px 0 14px; color: #1e395b; }
      .status span { margin-right: 22px; }
      .status span + span { margin-right: 7px; }
      .views { display: flex; margin-left: auto; gap: 1px; }
      .views .ctl { width: 22px; height: 23px; }
      .views .on { border: 1px solid #26a0da; background: #cde8f6; }
    `;
  }
  markup() {
    const pinned = ["CNC", "Proliner", "Waterjet", "Sawjet", "CNC DESK"];
    const recent = ["285804", "286410", "287269", "288405"];
    return `
      <div class="title">
        <ui-icon name="folder"></ui-icon><i></i>
        <div class="quick"><ui-icon name="checkDoc"></ui-icon><ui-icon name="folder"></ui-icon><ui-icon name="quickMenu"></ui-icon></div>
        <i></i><span>100000</span>
        <window-controls></window-controls>
      </div>
      <div class="tabs">
        <button class="file" type="button">File</button>
        <button class="on" type="button">Home</button>
        <button type="button">Share</button>
        <button type="button">View</button>
        <button class="ctl up" type="button" aria-label="Minimize the ribbon"><ui-icon name="collapse"></ui-icon></button>
        <button class="ctl" type="button" aria-label="Help"><ui-icon name="help"></ui-icon></button>
      </div>
      <ribbon-bar></ribbon-bar>
      <address-row></address-row>
      <div class="body">
        <nav class="tree">
          <nav-item icon="quick">Quick access</nav-item>
          <nav-item child pinned icon="download">Downloads</nav-item>
          <nav-item child pinned icon="documents">Documents</nav-item>
          <nav-item child pinned icon="pictures">Pictures</nav-item>
          ${pinned.map((n) => `<nav-item child pinned icon="folder">${n}</nav-item>`).join("")}
          ${recent.map((n) => `<nav-item child icon="folder">${n}</nav-item>`).join("")}
          <nav-item class="gap" current icon="pc">This PC</nav-item>
          <nav-item class="gap" icon="network">Network</nav-item>
        </nav>
        <file-table></file-table>
      </div>
      <div class="status">
        <span>1 item</span><span>1 item selected</span><span>45.0 KB</span>
        <div class="views">
          <button class="ctl on" type="button" aria-label="Details"><ui-icon name="details"></ui-icon></button>
          <button class="ctl" type="button" aria-label="Large thumbnails"><ui-icon name="thumbs"></ui-icon></button>
        </div>
      </div>
    `;
  }
}
customElements.define("file-explorer", FileExplorer);

// ---------- taskbar ----------

class TaskButton extends BaseElement {
  styles() {
    return `
      :host { display: block; width: 48px; }
      button { width: 100%; height: 100%; border: solid transparent; border-width: 2px 0; }
      :host([running]) button { background: linear-gradient(#9ccaf5, #9ccaf5) center bottom / 40px 2px no-repeat border-box; }
      :host([active]) button { background: #0b3c6f; border-bottom-color: #9ccaf5; }
    `;
  }
  markup() {
    const icon = this.getAttribute("icon");
    return `<button class="ctl" type="button" aria-label="${icon}"><ui-icon name="${icon}"></ui-icon></button>`;
  }
}
customElements.define("task-button", TaskButton);

class TaskBar extends BaseElement {
  styles() {
    return `
      :host { display: flex; height: 40px; background: #061826; color: #fff; }
      .start { width: 48px; }
      .search {
        display: flex;
        align-items: center;
        gap: 11px;
        width: 288px;
        padding-left: 11px;
        border: 1px solid #bfbfbf;
        background: #f1f2f4;
        color: #2b2b2b;
        font-size: 14px;
      }
      .search input { flex: 1; min-width: 0; outline: 0; }
      .search input::placeholder { color: #3a3a3a; }
      .apps { display: flex; gap: 1px; margin-left: 3px; }
      .tray { display: flex; margin-left: auto; padding-right: 4px; }
      .tray .ctl { width: 24px; }
      .tray .clock {
        width: 64px;
        line-height: 18px;
        text-align: center;
        white-space: nowrap;
      }
      .tray .note { width: 40px; margin-right: 8px; }
      .tray .peek { width: 1px; background: #4a5863; }
    `;
  }
  markup() {
    const apps = [
      ["firefox", "running"], ["calc"], ["ac", "running"], ["notes"], ["book"], ["kite", "running"],
      ["wordpad", "running"], ["pdf"], ["netFolder"], ["essLogo"], ["folderX"], ["folderBack"],
      ["scroll"], ["remote"], ["explorer", "active"],
    ];
    return `
      <button class="ctl start" type="button" aria-label="Start"><ui-icon name="windows"></ui-icon></button>
      <label class="search"><ui-icon name="search"></ui-icon><input type="text" aria-label="Search" placeholder="Type here to search"></label>
      <div class="apps">${apps.map(([n, s = ""]) => `<task-button icon="${n}" ${s}></task-button>`).join("")}</div>
      <div class="tray">
        <button class="ctl" type="button" aria-label="Hidden icons"><ui-icon name="trayUp"></ui-icon></button>
        <button class="ctl" type="button" aria-label="Network"><ui-icon name="trayNet"></ui-icon></button>
        <button class="ctl" type="button" aria-label="Volume"><ui-icon name="volume"></ui-icon></button>
        <button class="clock" type="button">6:00 PM<br>8/10/2026</button>
        <button class="ctl note" type="button" aria-label="Notifications"><ui-icon name="notice"></ui-icon></button>
        <button class="ctl peek" type="button" aria-label="Show desktop"></button>
      </div>
    `;
  }
}
customElements.define("task-bar", TaskBar);
</script>
</body>
</html>
